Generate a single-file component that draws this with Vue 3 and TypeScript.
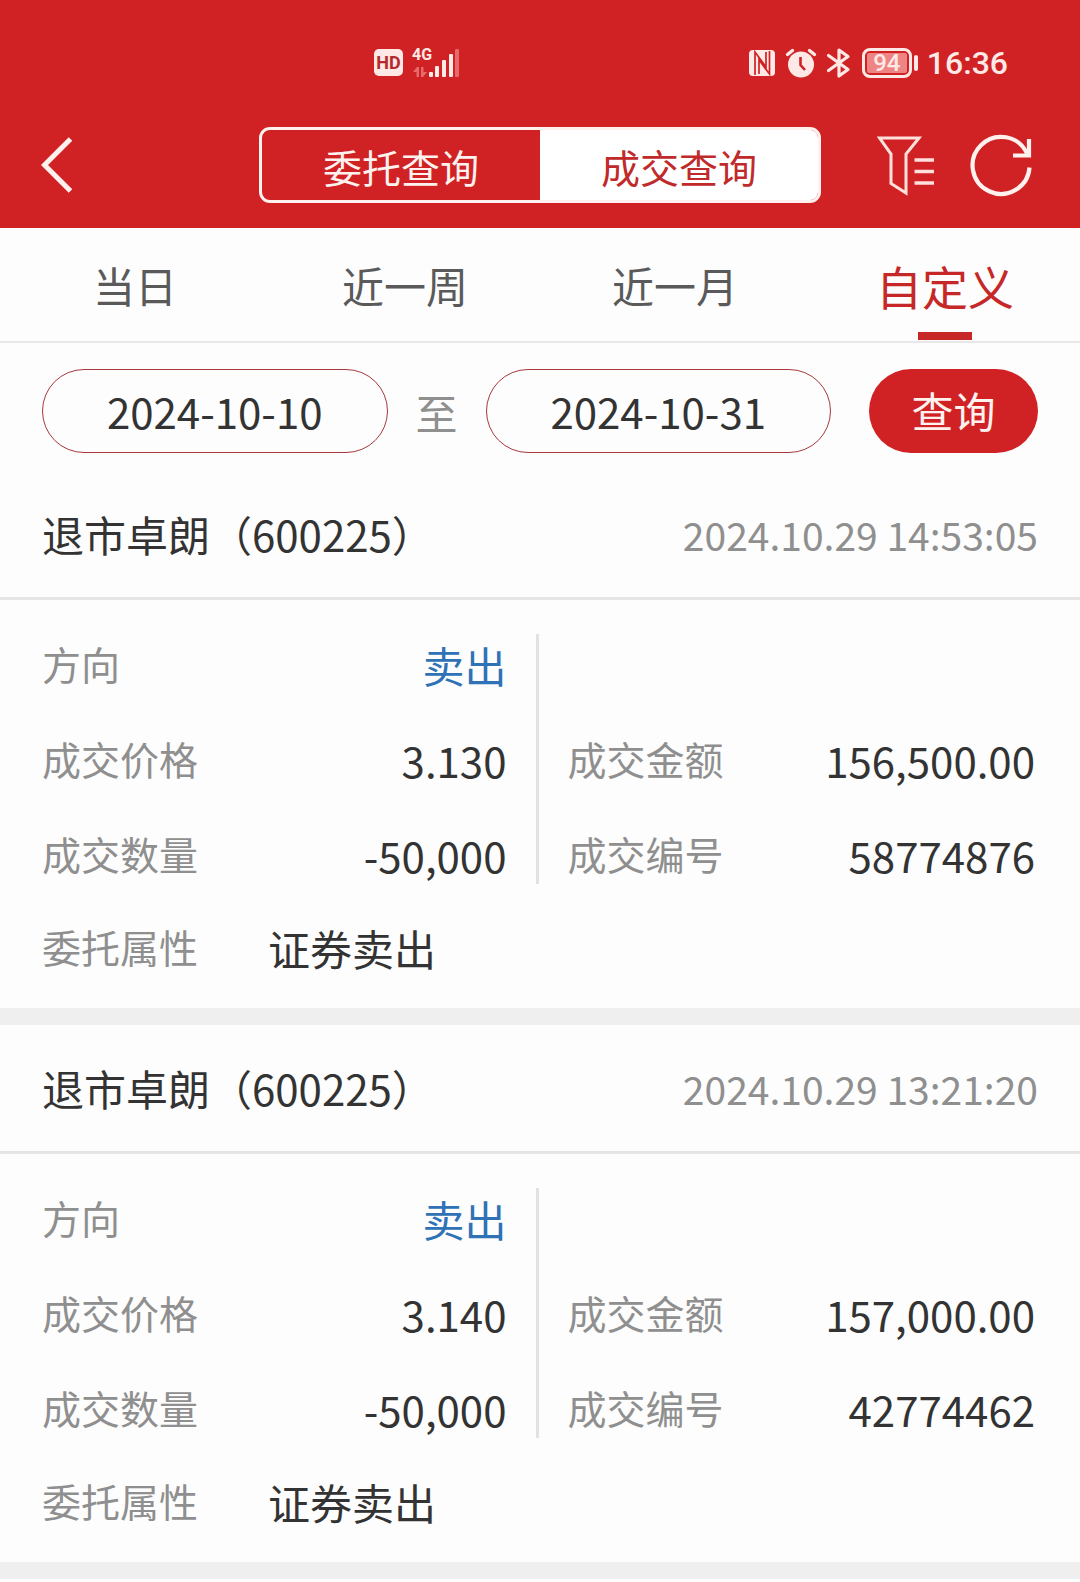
<script setup lang="ts">
import { ref } from 'vue'

interface Deal {
  id: string
  name: string
  time: string
  side: string
  price: string
  amount: string
  quantity: string
  attribute: string
}

const modes = ['委托查询', '成交查询']
const activeMode = ref('成交查询')

const ranges = ['当日', '近一周', '近一月', '自定义']
const activeRange = ref('自定义')

const startDate = ref('2024-10-10')
const endDate = ref('2024-10-31')

const deals: Deal[] = [
  {
    id: '58774876',
    name: '退市卓朗（600225）',
    time: '2024.10.29 14:53:05',
    side: '卖出',
    price: '3.130',
    amount: '156,500.00',
    quantity: '-50,000',
    attribute: '证券卖出',
  },
  {
    id: '42774462',
    name: '退市卓朗（600225）',
    time: '2024.10.29 13:21:20',
    side: '卖出',
    price: '3.140',
    amount: '157,000.00',
    quantity: '-50,000',
    attribute: '证券卖出',
  },
]
</script>

<template>
  <div class="page">
    <header class="top">
      <div class="status">
        <div class="status-group">
          <span class="hd">HD</span>
          <span class="signal">
            <span class="net">4G</span>
            <svg width="48" height="30" viewBox="0 0 48 30" aria-hidden="true">
              <g fill="#ffe9e6">
                <rect x="17" y="24" width="4" height="5" rx="1" />
                <rect x="23" y="18" width="4" height="11" rx="1" />
                <rect x="30" y="12" width="4" height="17" rx="1" />
                <rect x="37" y="6" width="4" height="23" rx="1" />
              </g>
              <g fill="#e8696a">
                <rect x="43" y="1" width="4" height="28" rx="1" />
                <path d="M1 24 L5 19 H7 V29 H4.500 V24 Z M9 19 H11.500 V24 H15 L11 29 H9 Z" />
              </g>
            </svg>
          </span>
        </div>
        <div class="status-group">
          <svg class="nfc" width="28" height="28" viewBox="0 0 28 28" aria-hidden="true">
            <rect x="1" y="1" width="26" height="26" rx="4" fill="#ffe9e6" />
            <path d="M7 26 V3 L18 18 V3 M21.500 2 V25 L11 11 V25" fill="none" stroke="#d02224" stroke-width="1.700" />
          </svg>
          <svg class="alarm" width="32" height="30" viewBox="0 0 32 30" aria-hidden="true">
            <circle cx="16" cy="16.500" r="13" fill="#ffe9e6" />
            <path d="M2.500 6.500 L7.500 2.500 M29.500 6.500 L24.500 2.500" stroke="#ffe9e6" stroke-width="3.400" stroke-linecap="round" />
            <path d="M15.500 9 V17 L20 22" fill="none" stroke="#d02224" stroke-width="2.600" />
          </svg>
          <svg class="bt" width="26" height="32" viewBox="0 0 26 32" aria-hidden="true">
            <path d="M2.500 8.500 L22 22.500 L13 29 V3 L22 9.500 L2.500 23.500" fill="none" stroke="#ffe9e6" stroke-width="3.200" stroke-linejoin="round" stroke-linecap="round" />
          </svg>
          <span class="battery"><span class="charge">94</span></span>
          <span class="nub"></span>
          <time class="clock">16:36</time>
        </div>
      </div>

      <nav class="nav">
        <button class="icon-btn" type="button" aria-label="返回">
          <svg width="34" height="58" viewBox="0 0 34 58">
            <path d="M29.500 3 L3.500 29 L29.500 55" fill="none" stroke="#fff1ee" stroke-width="5" />
          </svg>
        </button>
        <div class="segments">
          <button
            v-for="mode in modes"
            :key="mode"
            type="button"
            class="segment"
            :class="{ active: mode === activeMode }"
            @click="activeMode = mode"
          >{{ mode }}</button>
        </div>
        <div class="actions">
          <button class="icon-btn" type="button" aria-label="筛选">
            <svg width="58" height="62" viewBox="0 0 58 62">
              <path d="M2.500 4 H42 L29 20 V59 L14 49.500 V20 Z" fill="none" stroke="#ffe0dc" stroke-width="3" />
              <path d="M37.500 26 H57 M37.500 37.500 H57 M37.500 49 H57" stroke="#ffe0dc" stroke-width="3.400" />
            </svg>
          </button>
          <button class="icon-btn" type="button" aria-label="刷新">
            <svg width="64" height="64" viewBox="0 0 64 64">
              <path d="M60.500 34.500 A28.500 28.500 0 1 1 58 20.500" fill="none" stroke="#fff1ee" stroke-width="4.200" />
              <path d="M60 6 V22.500 H44" fill="none" stroke="#fff1ee" stroke-width="4.200" />
            </svg>
          </button>
        </div>
      </nav>
    </header>

    <div class="tabs">
      <button
        v-for="range in ranges"
        :key="range"
        type="button"
        class="tab"
        :class="{ active: range === activeRange }"
        @click="activeRange = range"
      >{{ range }}</button>
    </div>

    <form class="filter" @submit.prevent>
      <input v-model="startDate" class="date" type="text" aria-label="开始日期" />
      <span class="to">至</span>
      <input v-model="endDate" class="date" type="text" aria-label="结束日期" />
      <button class="query" type="submit">查询</button>
    </form>

    <main>
      <article v-for="deal in deals" :key="deal.id" class="deal">
        <header class="deal-head">
          <h2 class="name">{{ deal.name }}</h2>
          <time class="time">{{ deal.time }}</time>
        </header>
        <div class="deal-body">
          <div class="columns">
            <dl class="column left">
              <div class="row"><dt>方向</dt><dd class="sell">{{ deal.side }}</dd></div>
              <div class="row"><dt>成交价格</dt><dd>{{ deal.price }}</dd></div>
              <div class="row"><dt>成交数量</dt><dd>{{ deal.quantity }}</dd></div>
            </dl>
            <dl class="column right">
              <div class="row"><dt>成交金额</dt><dd>{{ deal.amount }}</dd></div>
              <div class="row"><dt>成交编号</dt><dd>{{ deal.id }}</dd></div>
            </dl>
          </div>
          <dl class="attribute">
            <dt>委托属性</dt>
            <dd>{{ deal.attribute }}</dd>
          </dl>
        </div>
      </article>
    </main>
  </div>
</template>

<style>
body {
  margin: 0;
  background: #fdfdfd;
}
</style>

<style scoped>
.page {
  font-family: "Noto Sans CJK SC", "Noto Sans", sans-serif;
  color: #333;
}

button,
input {
  box-sizing: border-box;
  margin: 0;
  padding: 0;
  border: 0;
  background: none;
  font-family: inherit;
}

svg {
  display: block;
}

.top {
  background: #d02224;
  padding-bottom: 25px;
}

.status {
  display: flex;
  justify-content: space-between;
  align-items: center;
  height: 127px;
  box-sizing: border-box;
  padding: 0 72px 2px 374px;
  font-family: Roboto, sans-serif;
  color: #ffe9e6;
}

.status-group {
  display: flex;
  align-items: center;
}

.hd {
  width: 29px;
  border-radius: 5px;
  background: #ffe9e6;
  color: #b5292d;
  font-size: 18px;
  font-weight: 700;
  line-height: 27px;
  text-align: center;
}

.signal {
  position: relative;
  margin-left: 9px;
}

.net {
  position: absolute;
  top: -1px;
  left: 0;
  font-size: 16px;
  font-weight: 700;
  line-height: 16px;
}

.alarm {
  margin-left: 9px;
}

.bt {
  margin-left: 9px;
}

.battery {
  box-sizing: border-box;
  width: 50px;
  height: 30px;
  margin-left: 10px;
  padding: 2px;
  border: 3px solid #ffe9e6;
  border-radius: 8px;
}

.charge {
  display: block;
  border-radius: 2px;
  background: #ee8584;
  font-size: 24px;
  font-weight: 500;
  line-height: 20px;
  text-align: center;
}

.nub {
  width: 4px;
  height: 16px;
  margin-left: 2px;
  border-radius: 2px;
  background: #ffe9e6;
}

.clock {
  margin-left: 9px;
  font-size: 32px;
  font-weight: 500;
  line-height: 36px;
}

.nav {
  display: grid;
  grid-template-columns: 1fr 52vw 1fr;
  align-items: center;
  padding: 0 41px;
}

.icon-btn {
  justify-self: start;
}

.segments {
  display: flex;
  height: 76px;
  box-sizing: border-box;
  border: 3px solid #fff1ee;
  border-radius: 11px;
  overflow: hidden;
}

.segment {
  flex: 1;
  padding-top: 2px;
  color: #fff1ee;
  font-size: 39px;
  line-height: 60px;
}

.segment.active {
  background: #fff;
  color: #c02a2a;
}

.actions {
  display: flex;
  justify-content: flex-end;
  align-items: center;
  gap: 34px;
  margin-right: 6px;
}

.tabs {
  display: flex;
  border-bottom: 2px solid #e8e8e8;
}

.tab {
  position: relative;
  flex: 1;
  height: 113px;
  color: #5a5a5a;
  font-size: 42px;
  line-height: 60px;
}

.tab.active {
  color: #c62828;
  font-size: 46px;
}

.tab.active::after {
  content: "";
  position: absolute;
  bottom: 1px;
  left: calc(50% - 27px);
  width: 54px;
  height: 8px;
  background: #c62828;
}

.filter {
  display: flex;
  align-items: center;
  padding: 26px 42px 18px;
}

.date {
  flex: 1;
  min-width: 0;
  height: 84px;
  padding-bottom: 2px;
  border: 1px solid #a8383b;
  border-radius: 42px;
  color: #333;
  font-size: 42px;
  text-align: center;
}

.to {
  width: 98px;
  padding-top: 2px;
  color: #8f8f8f;
  font-size: 42px;
  line-height: 60px;
  text-align: center;
}

.query {
  width: 169px;
  height: 84px;
  margin-left: 38px;
  padding-bottom: 2px;
  border-radius: 42px;
  background: #d02224;
  color: #fff1ee;
  font-size: 42px;
  line-height: 60px;
}

.deal {
  border-bottom: 17px solid #efefef;
}

.deal-head {
  display: flex;
  justify-content: space-between;
  align-items: center;
  padding: 33px 42px;
  border-bottom: 3px solid #e5e5e5;
}

.name {
  margin: 0;
  font-size: 42px;
  font-weight: 400;
  line-height: 60px;
}

.time {
  color: #8f8f8f;
  font-size: 39px;
  line-height: 60px;
}

.deal-body {
  padding: 34px 45px 31px 42px;
}

.columns {
  display: flex;
}

.column {
  box-sizing: border-box;
  width: 50%;
  display: flex;
  flex-direction: column;
  justify-content: flex-end;
  gap: 35px;
  margin: 0;
}

.left {
  padding-right: 29px;
  border-right: 3px solid #e2e2e2;
}

.right {
  padding-left: 29px;
}

.row {
  display: flex;
  justify-content: space-between;
  height: 60px;
}

dt {
  color: #8f8f8f;
  font-size: 39px;
  line-height: 58px;
}

dd {
  margin: 0;
  font-size: 42px;
  line-height: 62px;
}

.sell {
  color: #2f72b5;
}

.attribute {
  display: flex;
  gap: 70px;
  height: 60px;
  margin: 33px 0 0;
}
</style>
